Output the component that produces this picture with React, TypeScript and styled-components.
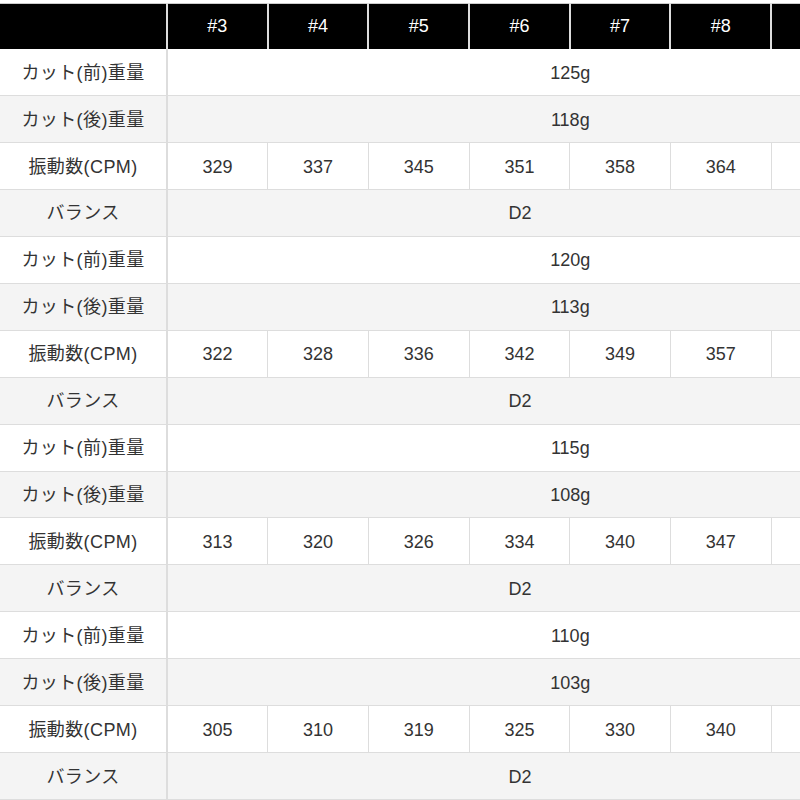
import styled, { createGlobalStyle } from 'styled-components';

const GlobalStyle = createGlobalStyle`
  html, body {
    margin: 0;
    padding: 0;
    background: #fff;
  }
  body {
    font-family: "Liberation Sans", Arial, "Noto Sans CJK JP", sans-serif;
    color: #333;
    overflow: hidden;
  }
`;

const Wrap = styled.div`
  padding-top: 3px;
  width: 800px;
  overflow: hidden;
`;

const Table = styled.table`
  border-collapse: collapse;
  table-layout: fixed;
  width: 972.6px;
  font-size: 18px;
  line-height: 27px;
  border-top: 1px solid #ccc;
`;

const HeadCell = styled.th`
  background: #000;
  color: #fff;
  font-weight: normal;
  text-align: center;
  padding: 9.4px 0 8.4px;
  border-left: 2px solid #ddd;

  &:first-child {
    border-left: none;
  }
`;

const Row = styled.tr<{ $shade: boolean }>`
  background: ${({ $shade }) => ($shade ? '#f4f4f4' : '#fff')};
`;

const Label = styled.td`
  text-align: center;
  padding: 10.8px 0 8.18px;
  border-bottom: 1px solid #ddd;
  border-right: 2px solid #ddd;
  white-space: nowrap;
  letter-spacing: 0.4px;
`;

const Cell = styled.td<{ $noLeft?: boolean }>`
  text-align: center;
  padding: 10.8px 0 8.18px;
  border-bottom: 1px solid #ddd;
  border-left: ${({ $noLeft }) => ($noLeft ? 'none' : '1px solid #ddd')};
`;

const columns = ['#3', '#4', '#5', '#6', '#7', '#8'];

const groups = [
  { front: '125g', back: '118g', cpm: [329, 337, 345, 351, 358, 364] },
  { front: '120g', back: '113g', cpm: [322, 328, 336, 342, 349, 357] },
  { front: '115g', back: '108g', cpm: [313, 320, 326, 334, 340, 347] },
  { front: '110g', back: '103g', cpm: [305, 310, 319, 325, 330, 340] },
];

export default function App() {
  return (
    <Wrap>
      <GlobalStyle />
      <Table>
        <colgroup>
          <col style={{ width: 167 }} />
          {Array.from({ length: 8 }, (_, i) => (
            <col key={i} style={{ width: 100.7 }} />
          ))}
        </colgroup>
        <thead>
          <tr>
            <HeadCell />
            {columns.map((c) => (
              <HeadCell key={c}>{c}</HeadCell>
            ))}
            <HeadCell />
            <HeadCell />
          </tr>
        </thead>
        <tbody>
          {groups.map((g, i) => [
            <Row key={`${i}-f`} $shade={false}>
              <Label>カット(前)重量</Label>
              <Cell colSpan={8}>{g.front}</Cell>
            </Row>,
            <Row key={`${i}-b`} $shade>
              <Label>カット(後)重量</Label>
              <Cell colSpan={8}>{g.back}</Cell>
            </Row>,
            <Row key={`${i}-c`} $shade={false}>
              <Label>振動数(CPM)</Label>
              {g.cpm.map((v, j) => (
                <Cell key={j}>{v}</Cell>
              ))}
              <Cell />
              <Cell />
            </Row>,
            <Row key={`${i}-d`} $shade>
              <Label>バランス</Label>
              <Cell colSpan={7}>D2</Cell>
              <Cell $noLeft />
            </Row>,
          ])}
        </tbody>
      </Table>
    </Wrap>
  );
}
